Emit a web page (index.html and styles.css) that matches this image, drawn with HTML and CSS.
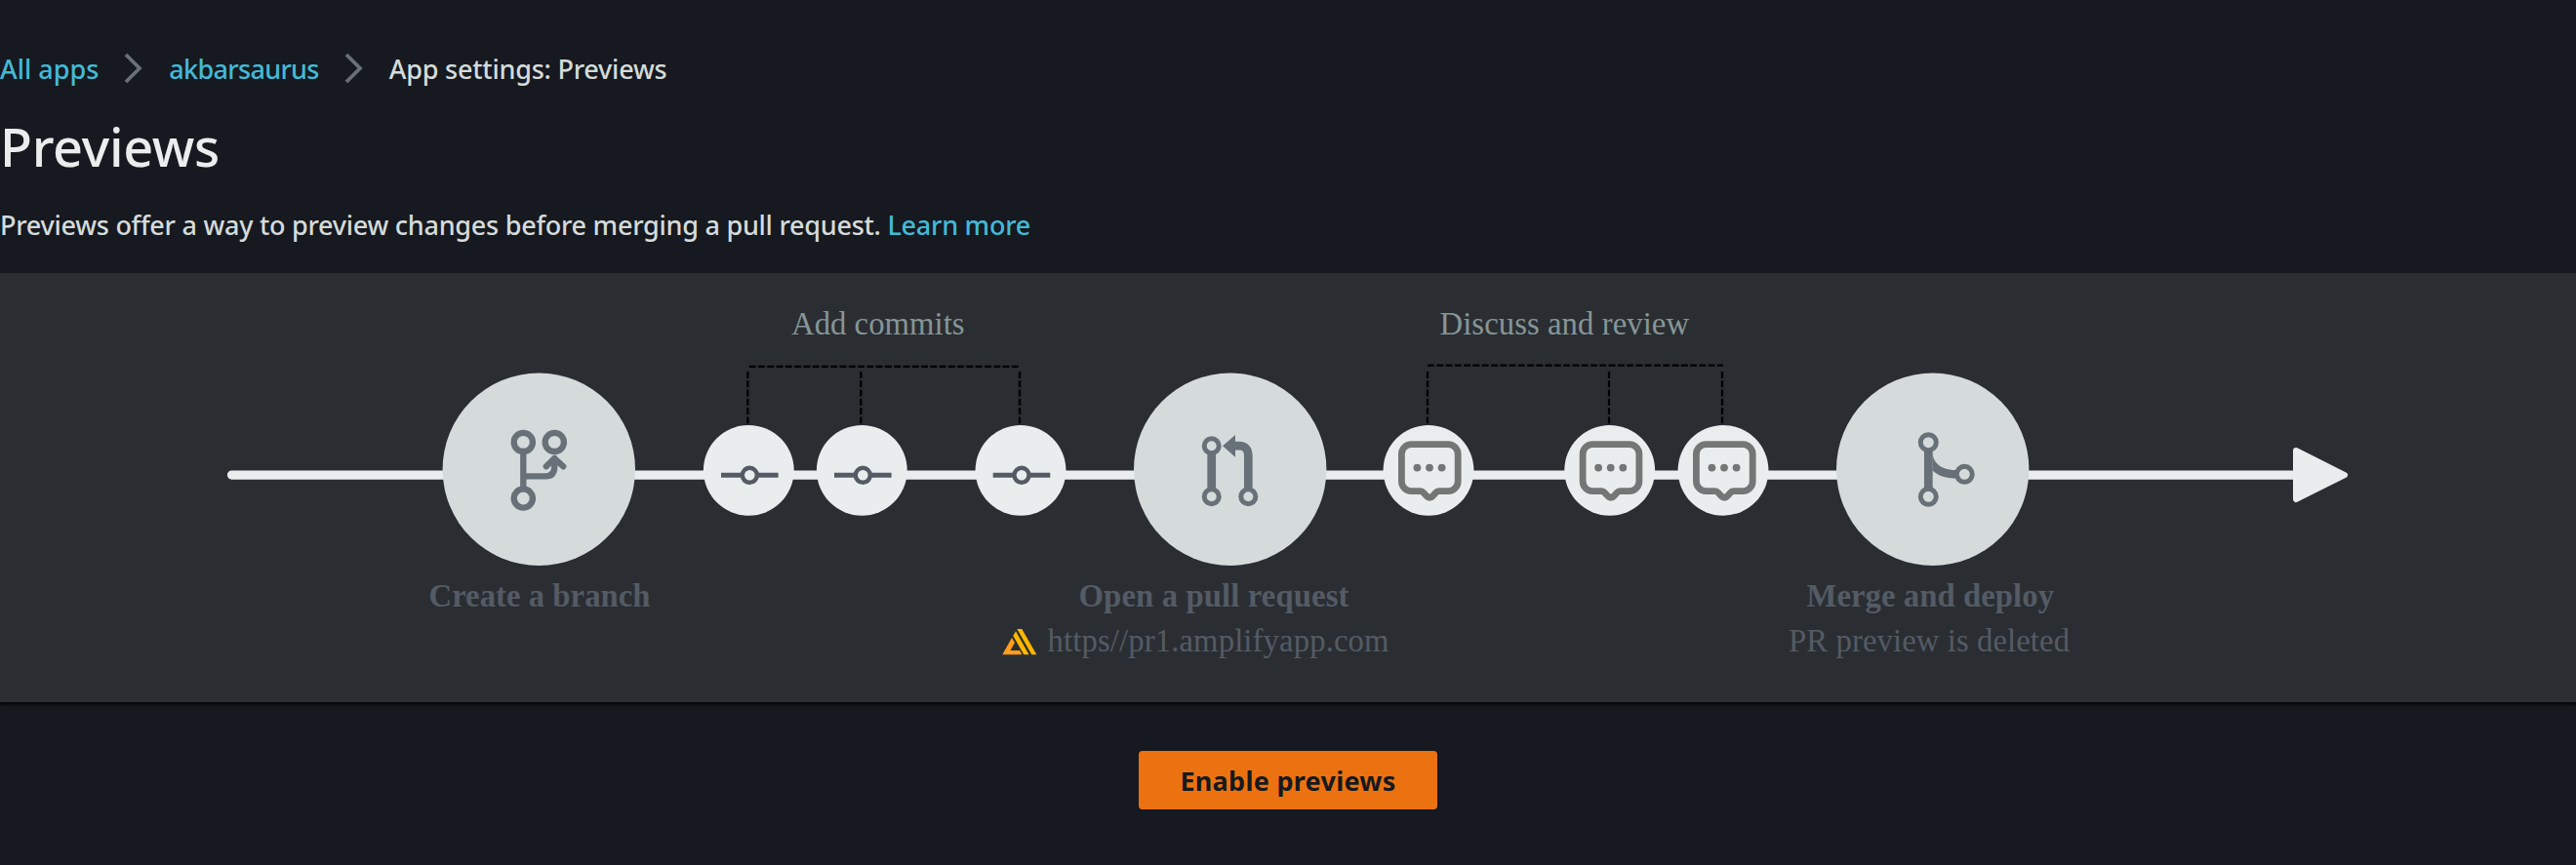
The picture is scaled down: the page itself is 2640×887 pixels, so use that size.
FILE: index.html
```html
<!DOCTYPE html>
<html lang="en">
<head>
<meta charset="utf-8">
<title>Previews</title>
<link rel="stylesheet" href="styles.css">
</head>
<body>
<header class="page-header">
  <nav class="breadcrumbs">
    <a class="link crumb crumb-apps" href="#">All apps</a>
    <svg class="chevron" viewBox="0 0 20 32"><path d="M2 2L16 16L2 30"/></svg>
    <a class="link crumb crumb-name" href="#">akbarsaurus</a>
    <svg class="chevron" viewBox="0 0 20 32"><path d="M2 2L16 16L2 30"/></svg>
    <span class="crumb crumb-current">App settings: Previews</span>
  </nav>
  <h1 class="title">Previews</h1>
  <p class="description">Previews offer a way to preview changes before merging a pull request. <a class="link" href="#">Learn more</a></p>
</header>
<main>
  <section class="workflow">
    <svg class="diagram" viewBox="0 280 2640 440">
      <defs>
        <g id="commit">
          <circle class="small-node" r="46.4"/>
          <path class="commit-line" d="M-28.3 5H30.3"/>
          <circle class="commit-dot" cx="1" cy="5" r="7.5"/>
        </g>
        <g id="comment">
          <circle class="small-node" r="46.4"/>
          <path class="bubble" d="M-17.6 -26.6H20.2A10 10 0 0 1 30.2 -16.6V11.3A10 10 0 0 1 20.2 21.3H10.5Q8.8 21.3 7.6 22.8L4.5 26.2Q1.2 29.5 -2.1 26.2L-5.3 22.8Q-6.5 21.3 -8.2 21.3H-17.6A10 10 0 0 1 -27.6 11.3V-16.6A10 10 0 0 1 -17.6 -26.6Z"/>
          <g class="bubble-dots"><circle cx="-11.6" cy="-2.7" r="3.9"/><circle cx="1" cy="-2.7" r="3.9"/><circle cx="13.6" cy="-2.7" r="3.9"/></g>
        </g>
      </defs>
      <path class="timeline" d="M237.5 487.1H2352"/>
      <path class="arrowhead" d="M2353 462L2403 487.1L2353 512Z"/>

      <g class="dashes">
        <path d="M767.7 375.8H1044"/>
        <path d="M766.3 381V436M882.3 381V436M1045 381V436"/>
        <path d="M1463 374.7H1766"/>
        <path d="M1463 381V436M1649 381V436M1765 381V436"/>
      </g>

      <circle class="big-node" cx="552.3" cy="481.3" r="98.7"/>
      <g class="branch-icon">
        <path d="M536.3 463V501M536.3 488.4H559.3Q568.3 488.4 568.3 478V470M559.8 478.3L568.3 470L577.2 478.3"/>
        <circle cx="536.3" cy="453.4" r="9.6"/><circle cx="568.3" cy="453.4" r="9.6"/><circle cx="536.3" cy="511" r="9.6"/>
      </g>

      <use href="#commit" x="767.3" y="482.3"/>
      <use href="#commit" x="883.3" y="482.3"/>
      <use href="#commit" x="1046" y="482.3"/>

      <circle class="big-node" cx="1260.7" cy="481.3" r="98.7"/>
      <g class="octicon">
        <path class="stem" d="M1241.7 466V501M1265 457.2H1269.5Q1279.3 457.2 1279.3 467.5V501"/>
        <path class="solid" d="M1253 457.3L1266 446V468.7Z"/>
        <circle cx="1241.7" cy="457.3" r="7.5"/><circle cx="1241.7" cy="509.3" r="7.5"/><circle cx="1279.3" cy="509.3" r="7.5"/>
      </g>

      <use href="#comment" x="1464" y="482.3"/>
      <use href="#comment" x="1649.7" y="482.3"/>
      <use href="#comment" x="1766" y="482.3"/>

      <circle class="big-node" cx="1980.7" cy="481.3" r="98.7"/>
      <g class="octicon">
        <path class="stem" d="M1976.3 462V501"/>
        <path class="solid" d="M1980.5 463C1980.5 475 1990 482 2004.5 482V490.5C1995 490.5 1987 488.5 1980.5 482.5Z"/>
        <circle cx="1976.3" cy="453.7" r="8"/><circle cx="1976.3" cy="509.3" r="8"/><circle cx="2013.3" cy="486.3" r="8"/>
      </g>

      <g class="label muted">
        <text x="811" y="343" textLength="177.5">Add commits</text>
        <text x="1475.5" y="343" textLength="255.5">Discuss and review</text>
      </g>
      <g class="label strong">
        <text x="439.5" y="622" textLength="227">Create a branch</text>
        <text x="1105.5" y="622" textLength="277">Open a pull request</text>
        <text x="1851.5" y="622" textLength="253.5">Merge and deploy</text>
      </g>
      <g class="label">
        <text x="1073.5" y="668" textLength="350">https//pr1.amplifyapp.com</text>
        <text x="1833" y="668" textLength="288">PR preview is deleted</text>
      </g>
      <g class="amplify">
        <path class="amber" d="M1027.3 671.3L1037 654L1040 659L1035.5 667H1045L1047.5 671.3Z"/>
        <path class="gold" d="M1038.3 652L1041 647.3L1054.5 671.3H1049.3ZM1042.3 645H1047.3L1062.3 671.3H1057.3Z"/>
      </g>
    </svg>
  </section>
  <div class="actions"><button class="enable-button" type="button">Enable previews</button></div>
</main>
</body>
</html>
```

FILE: styles.css
```css
* { box-sizing: border-box; }
body { margin: 0; width: 2640px; height: 887px; overflow: hidden; background: #16191f; color: #d5dbdb; font-family: "Noto Sans", sans-serif; font-size: 27px; font-weight: 500; }
.page-header { height: 280px; padding-top: 50px; }
.link { color: #44b9d6; text-decoration: none; }
.breadcrumbs { display: flex; align-items: center; height: 40px; line-height: 40px; white-space: nowrap; }
.crumb { padding-top: 2px; }
.crumb-name { letter-spacing: -0.7px; }
.crumb-current { letter-spacing: -0.23px; }
.chevron { width: 20px; height: 32px; margin: 0 26px; fill: none; stroke: #687078; stroke-width: 3.8; }
.title { margin: 25px 0 0; height: 70px; line-height: 70px; color: #eaeded; font-size: 54px; font-weight: 500; letter-spacing: -0.3px; }
.description { margin: 26px 0 0; line-height: 40px; white-space: nowrap; letter-spacing: -0.26px; }
.workflow { height: 440px; background: #2a2e33; }
.diagram { display: block; width: 2640px; height: 440px; }
.timeline { fill: none; stroke: #e9eded; stroke-width: 9.2; stroke-linecap: round; }
.arrowhead { fill: #e9eded; stroke: #e9eded; stroke-width: 6; stroke-linejoin: round; }
.dashes { fill: none; stroke: #000; stroke-width: 2.3; stroke-dasharray: 6.96 2.32; }
.big-node { fill: #d5dbdb; }
.small-node { fill: #e9eded; }
.commit-line { stroke: #545b64; stroke-width: 5; }
.commit-dot { fill: #e9eded; stroke: #545b64; stroke-width: 4.4; }
.bubble { fill: none; stroke: #737675; stroke-width: 6.8; }
.bubble-dots { fill: #737675; }
.branch-icon { fill: none; stroke: #687078; stroke-width: 6.3; stroke-linecap: round; stroke-linejoin: round; }
.octicon { fill: #d5dbdb; stroke: #687078; stroke-width: 5; }
.octicon .stem { fill: none; stroke-width: 8.7; }
.octicon .solid { fill: #687078; stroke: none; }
.label { fill: #545b64; font-family: "Liberation Serif", serif; font-size: 32.7px; font-weight: 400; }
.muted { fill: #879596; }
.strong { font-weight: 700; }
.amber { fill: #ff9d1c; }
.gold { fill: #ffb800; }
.actions { display: flex; justify-content: center; padding-top: 50px; height: 167px; box-shadow: inset 0 5px 3px -2px #08090b; }
.enable-button { width: 306px; height: 60px; padding: 1px 0 0; border: 0; border-radius: 4px; background: #ec7211; color: #16191f; font: 700 27px/59px "Noto Sans", sans-serif; letter-spacing: 0.28px; white-space: nowrap; }
```
